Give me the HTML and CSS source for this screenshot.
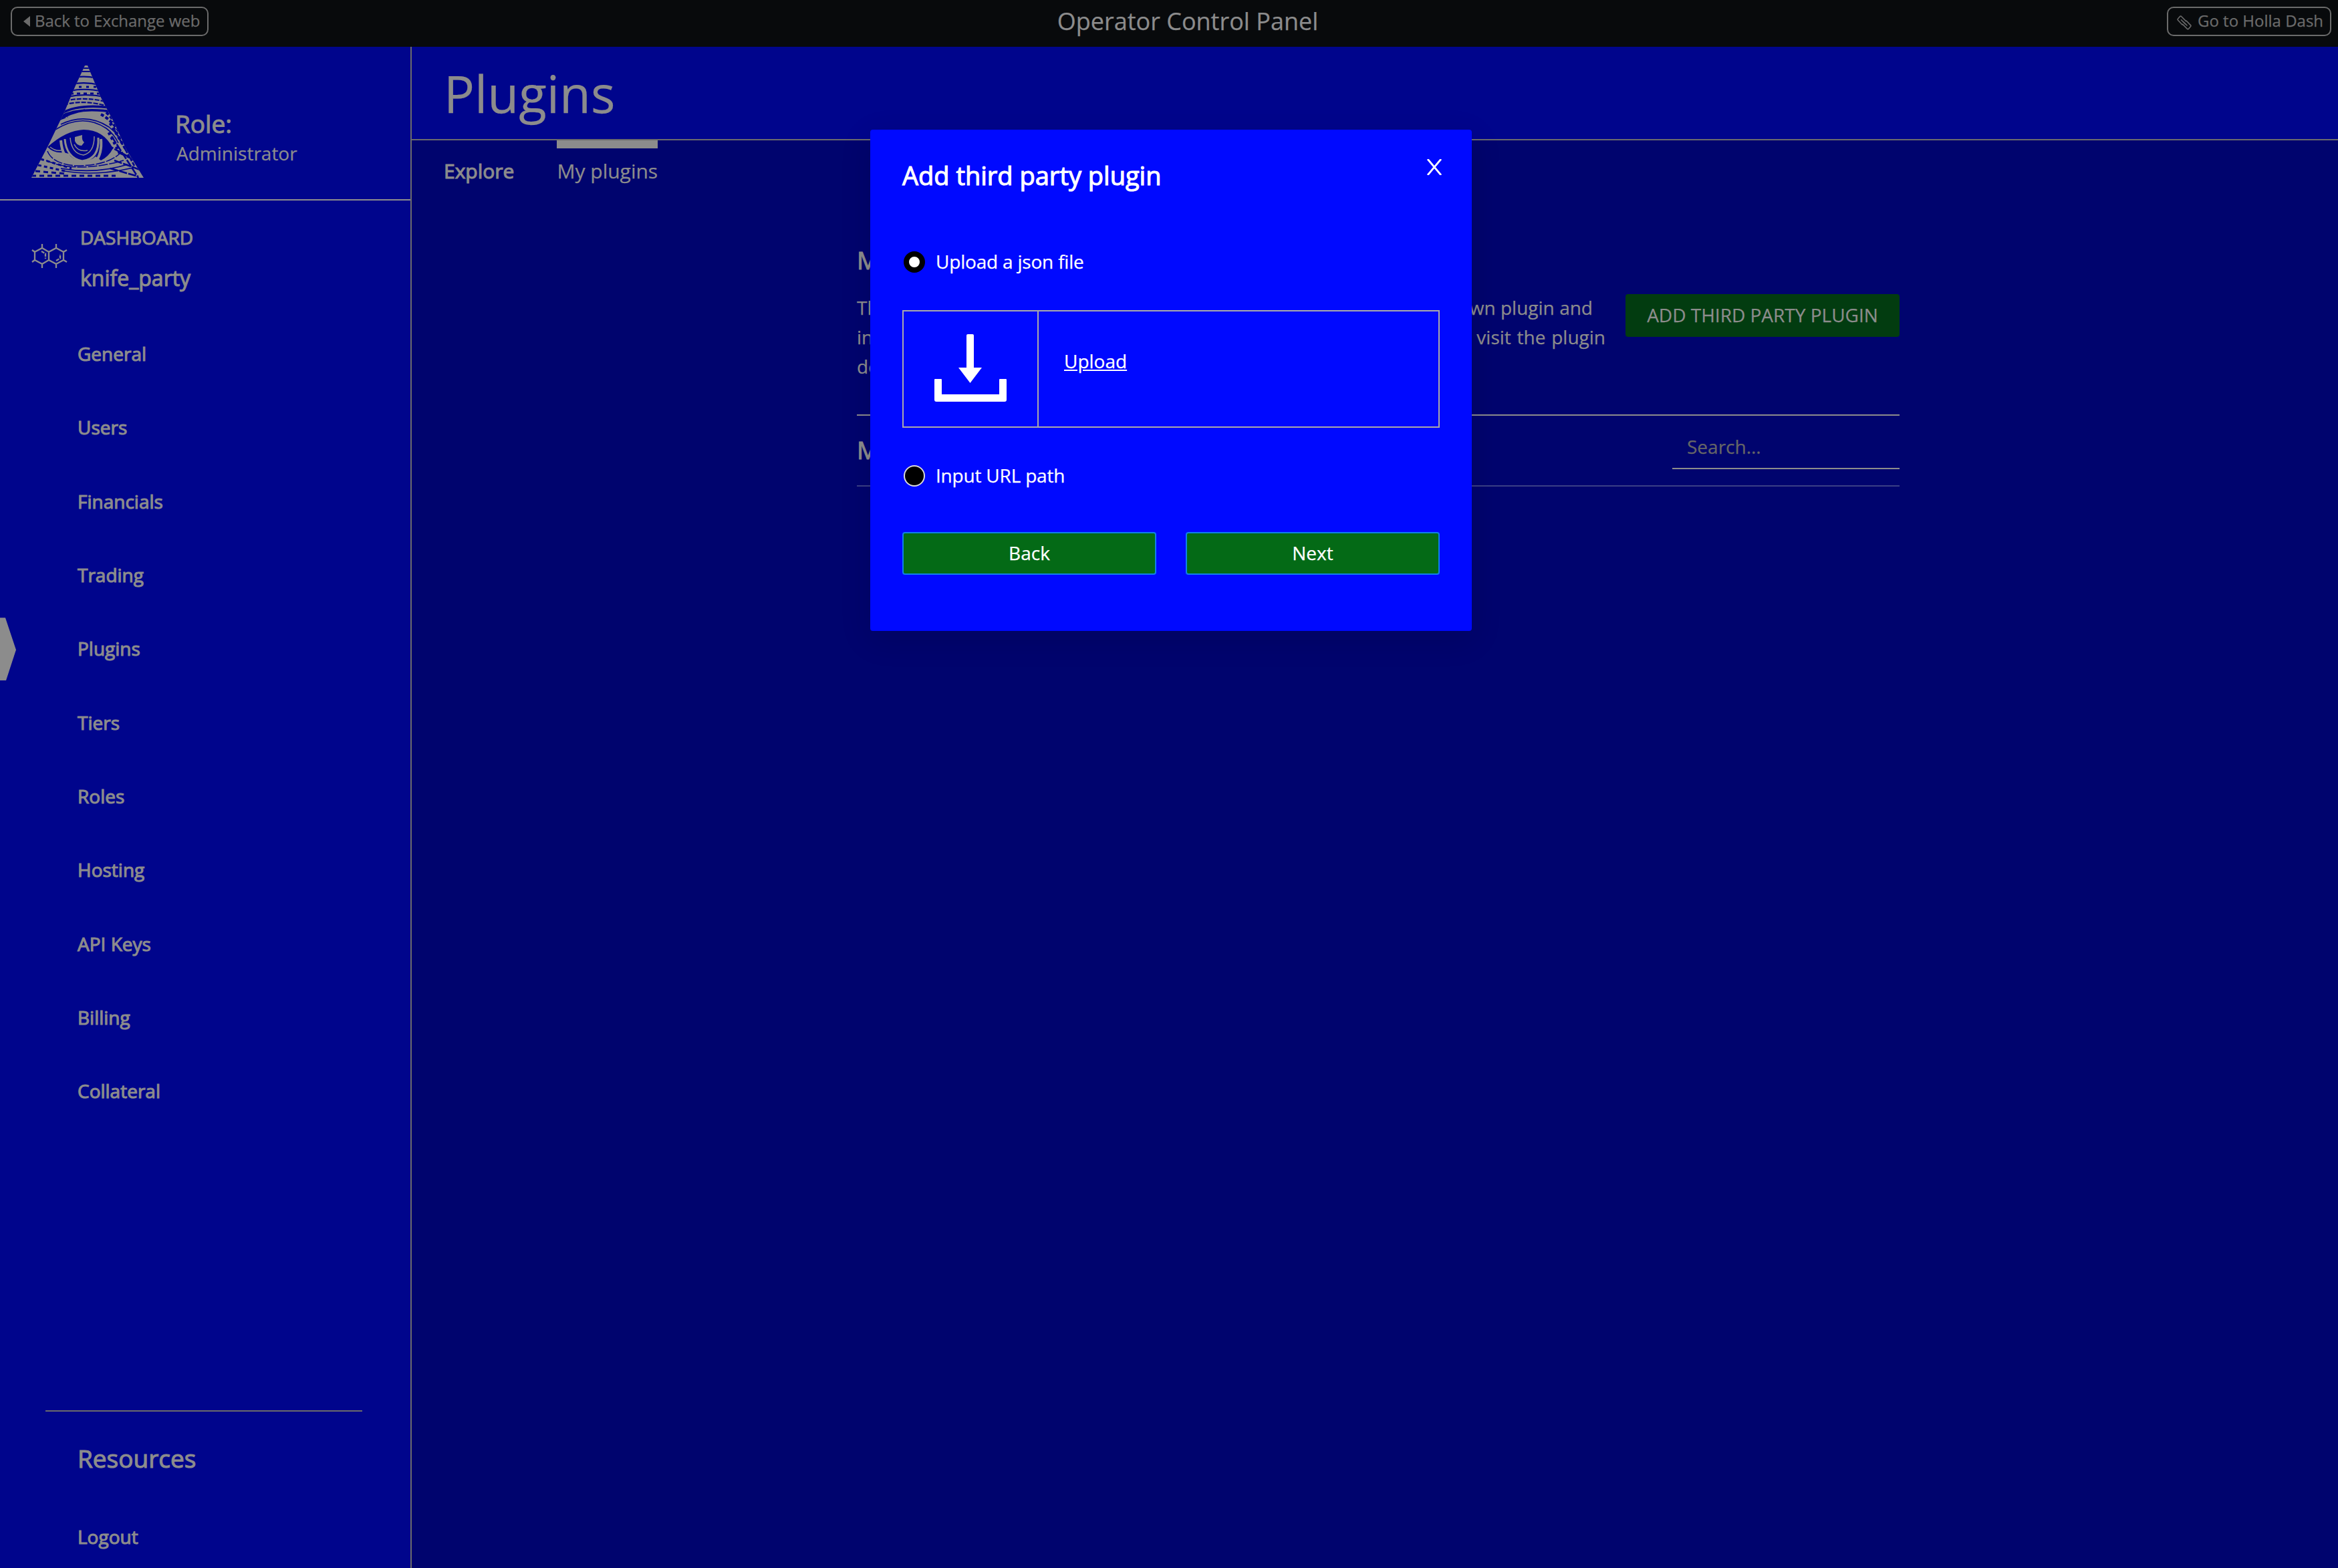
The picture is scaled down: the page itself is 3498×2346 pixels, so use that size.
FILE: index.html
```html
<!DOCTYPE html>
<html lang="en">
<head>
<meta charset="utf-8">
<title>Operator Control Panel</title>
<link rel="stylesheet" href="styles.css">
</head>
<body>
<div class="app">
  <header class="topbar">
    <a class="top-link top-link-back"><svg class="caret" viewBox="0 0 10 16"><path d="M10 0V16L0 8Z" fill="currentColor"/></svg><span>Back to Exchange web</span></a>
    <h1 class="top-title">Operator Control Panel</h1>
    <a class="top-link top-link-dash"><svg class="clip" viewBox="0 0 22 22" fill="none" stroke="currentColor" stroke-width="1.6" stroke-linecap="round" stroke-linejoin="round"><path d="M8 14L1.6 7.2Q.6 6 1.6 5L4.4 1.8Q5.6.6 6.8 1.8L13.500 8.600M6.500 6.800L12.500 13M9.500 9.500L15 15M14 8L20.400 14.600Q21.400 15.800 20.400 16.800L17.600 20Q16.400 21.200 15.200 20L8.600 13.400"/></svg><span>Go to Holla Dash</span></a>
  </header>
  <div class="body">
    <aside class="sidebar">
      <div class="profile">
        <svg class="logo" viewBox="0 0 168 168">
          <defs><clipPath id="pyramid"><path d="M80 0L84 0L104 48L124 86L142 126L168 168H0L26 118L50 68L66 30Z"/></clipPath></defs>
          <g clip-path="url(#pyramid)">
            <rect width="168" height="168" fill="#8c8c8c"/>
            <g fill="none" stroke="#00058c" stroke-width="2.200">
              <path d="M72 4H92M70 9H94M64 18Q80 15 98 19M60 28Q80 24 102 29M58 38Q80 33 106 39M54 47Q80 41 110 47"/>
              <path d="M50 53Q80 46 116 55M48 59Q80 50 118 62" stroke-dasharray="7 2"/>
              <path d="M60 32H106" stroke-dasharray="4 7" stroke-width="3"/>
              <path d="M58 42H110" stroke-dasharray="5 5" stroke-width="3"/>
              <path d="M44 72Q70 57 118 63M42 77Q72 61 126 70M38 83Q60 69 80 67" stroke-width="3.500"/>
              <path d="M32 87Q44 78 54 76M104 73Q124 84 138 110M112 70Q134 92 144 120" stroke-width="4" stroke-dasharray="5 3"/>
              <path d="M34 97Q76 70 112 94Q124 103 130 116M44 88Q82 70 116 92Q128 102 134 110" stroke-width="1.600"/>
              <path d="M24 128Q32 148 68 150Q112 150 132 132M22 142Q66 162 138 142" stroke-width="1.500" stroke-dasharray="14 2"/>
              <path d="M44 154Q96 163 144 148M50 158Q96 166 152 153" stroke-width="1.600"/>
              <path d="M14 140L60 154M10 149L50 158" stroke-dasharray="5 4" stroke-width="3"/>
              <path d="M6 158L52 162M0 165H126" stroke-dasharray="7 5" stroke-width="3"/>
              <path d="M124 96L154 150M120 106L160 168M130 130L168 148M124 142L168 158M118 154L160 166M112 118L148 138" stroke-width="2.600" stroke-dasharray="12 2"/>
              <path d="M118 86L142 126M116 100L134 134" stroke-width="5" stroke-dasharray="4 4"/>
            </g>
            <path d="M24 122Q52 97 78 96Q108 96 122 124Q116 136 104 142L96 136Q88 144 72 142Q60 140 56 132L48 130Q34 132 24 122Z" fill="#00058c"/>
            <g fill="none" stroke="#8c8c8c" stroke-width="3">
              <path d="M50 110Q52 138 76 143Q102 140 100 108"/>
              <path d="M58 108Q60 132 78 134Q94 130 94 106" stroke-width="1.500"/>
              <path d="M44 112Q46 138 62 146M104 110Q106 132 96 144" stroke-width="4"/>
              <path d="M28 122Q38 130 48 126M64 118Q70 130 84 127" stroke-width="1.500"/>
            </g>
            <path d="M65 107L76 104Q75 112 79 115L75 120Q68 120 65 113Z" fill="#8c8c8c"/>
          </g>
        </svg>
        <div class="role">
          <div class="role-label faux">Role:</div>
          <div class="role-name">Administrator</div>
        </div>
      </div>
      <div class="dash">
        <svg class="molecule" viewBox="0 0 54 38" fill="none" stroke="#8c8c8c" stroke-width="2.300"><path d="M16 1V7L5 13V25L16 31V37M37 1V7L26 13V25L37 31V37M16 7L26 13L37 7L48 13V25L37 31L26 25L16 31M5 13L1 10M5 25L1 28M48 13L53 10M48 25L53 28"/><path d="M15 12L21 15.500V23M37 26L43 22.500V16" stroke-dasharray="5 1.500"/></svg>
        <div class="dash-text">
          <div class="dash-title faux">DASHBOARD</div>
          <div class="dash-name faux">knife_party</div>
        </div>
      </div>
      <nav class="menu faux">
        <a>General</a><a>Users</a><a>Financials</a><a>Trading</a><a class="active">Plugins</a><a>Tiers</a><a>Roles</a><a>Hosting</a><a>API Keys</a><a>Billing</a><a>Collateral</a>
      </nav>
      <div class="side-bottom">
        <div class="resources faux">Resources</div>
        <div class="logout faux">Logout</div>
      </div>
    </aside>
    <main class="main">
      <h2 class="page-title">Plugins</h2>
      <div class="tabs"><a class="tab faux">Explore</a><a class="tab tab-active">My plugins</a></div>
      <section class="content">
        <h3 class="section-title faux">My plugins</h3>
        <div class="intro">
          <div class="intro-text">
            <p class="line line-a">This is where you can manage all your plugins. You can develop your own plugin and</p>
            <p class="line line-b">install it here for your exchange. For more details about development visit the plugin</p>
            <p class="line line-c">developer docs.</p>
          </div>
          <button class="add">ADD THIRD PARTY PLUGIN</button>
        </div>
        <div class="list-head">
          <h3 class="list-title faux">My plugins</h3>
          <div class="search">Search...</div>
        </div>
      </section>
    </main>
  </div>
</div>
<div class="modal">
  <svg class="close" viewBox="0 0 24 24" fill="none" stroke="#fff" stroke-width="2.800"><path d="M2 0L22 24M22 0L2 24"/></svg>
  <h2 class="modal-title faux">Add third party plugin</h2>
  <label class="option"><span class="radio radio-on"></span><span class="option-text">Upload a json file</span></label>
  <div class="upload">
    <div class="upload-icon"><svg class="tray" viewBox="0 0 108 102"><path d="M48 2Q48 0 50 0H57Q59 0 59 2V50H71L53.500 73L36 50H48Z" fill="#fff"/><path d="M0 68Q0 67 1 67H10Q11 67 11 68V90H97V68Q97 67 98 67H107Q108 67 108 68V98Q108 101 105 101H3Q0 101 0 98Z" fill="#fff"/></svg></div>
    <div class="upload-body"><a class="upload-link">Upload</a></div>
  </div>
  <label class="option option-url"><span class="radio"></span><span class="option-text">Input URL path</span></label>
  <div class="actions"><button class="btn">Back</button><button class="btn">Next</button></div>
</div>
</body>
</html>
```
FILE: styles.css
```css
* { box-sizing: border-box; }
body { margin: 0; background: #00046e; font-family: "Open Sans", sans-serif; font-size: 28px; line-height: 44px; color: #8c8c8c; overflow: hidden; -webkit-text-stroke: 0.25px currentColor; }
h1, h2, h3, p { margin: 0; font-weight: 400; }
button { font: inherit; margin: 0; padding: 0; }
.faux { -webkit-text-stroke: 1.1px currentColor; }
.app { width: 3498px; height: 2346px; display: flex; flex-direction: column; }
.topbar { height: 70px; flex: none; background: #080a0c; display: flex; justify-content: space-between; align-items: flex-start; padding: 10px 10px 0 16px; }
.top-link { display: flex; align-items: center; height: 44px; border: 2px solid #6b6b6b; border-radius: 10px; color: #6b6b6b; font-size: 24px; line-height: 38px; white-space: nowrap; }
.top-link span { padding-bottom: 2px; }
.top-link-back { width: 296px; padding-left: 17px; gap: 7px; letter-spacing: -0.04px; }
.top-link-dash { width: 246px; padding-left: 13px; gap: 9px; }
.caret { width: 10px; height: 16px; }
.clip { width: 22px; height: 22px; margin-top: 4px; }
.top-title { font-size: 36px; line-height: 44px; }
.body { flex: 1; display: flex; min-height: 0; }
.sidebar { width: 616px; border-right: 2px solid #6b6b6b; background: #00058c; display: flex; flex-direction: column; }
.profile { height: 230px; border-bottom: 2px solid #8c8c8c; display: flex; padding: 28px 0 0 47px; }
.logo { width: 168px; height: 168px; }
.role { padding: 63px 0 0 47px; }
.role-label { font-size: 37px; line-height: 48px; }
.role-name { line-height: 40px; margin-left: 2px; }
.dash { display: flex; padding: 33px 0 0 47px; }
.molecule { width: 54px; height: 38px; margin-top: 31px; }
.dash-text { padding-left: 19px; }
.dash-name { font-size: 32px; line-height: 48px; margin-top: 15px; }
.menu { padding-top: 34px; display: flex; flex-direction: column; }
.menu a { height: 110.3px; display: flex; align-items: center; padding-left: 116px; position: relative; }
.menu .active::before { content: ""; position: absolute; left: 0; top: 9px; width: 24px; height: 94px; background: #8c8c8c; clip-path: polygon(0 0, 8px 0, 24px 48px, 9px 94px, 0 94px); }
.side-bottom { margin: auto 72px 0 68px; height: 236px; border-top: 2px solid #6b6b6b; padding: 46px 0 0 48px; }
.resources { font-size: 37px; line-height: 48px; }
.logout { margin-top: 71px; }
.main { flex: 1; display: flex; flex-direction: column; }
.page-title { height: 140px; flex: none; background: #00058c; border-bottom: 2px solid #6b6b6b; font-size: 76.500px; line-height: 139px; padding-left: 48px; }
.tabs { display: flex; padding-left: 48px; gap: 64px; height: 98px; font-size: 30px; }
.tab { padding-top: 24px; border-top: 0 solid #8c8c8c; }
.tab-active { border-top-width: 12px; padding-top: 12px; }
.content { width: 1560px; margin-left: 666px; padding-top: 55px; }
.section-title, .list-title { font-size: 37px; line-height: 52px; }
.intro { display: flex; justify-content: space-between; align-items: flex-start; height: 205px; padding-top: 23px; }
.line { text-align-last: justify; white-space: nowrap; }
.line-a { width: 1101px; }
.line-b { width: 1120px; }
.line-c { width: 210px; }
.add { width: 410px; height: 64px; margin-top: 2px; padding-bottom: 2px; border: 0; border-radius: 4px; background: #023c10; color: #8c8c8c; }
.list-head { height: 108px; border-top: 2px solid #8c8c8c; border-bottom: 2px solid #3a3f85; display: flex; justify-content: space-between; align-items: flex-start; padding-top: 24px; }
.list-title { padding-top: 1px; }
.search { width: 340px; height: 56px; border-bottom: 2px solid #8c8c8c; color: #666; padding-left: 22px; }
.modal { position: absolute; left: 1302px; top: 194px; width: 900px; height: 750px; padding: 44px 48px 0; background: #0009ff; color: #fff; border-radius: 4px; box-shadow: 0 12px 48px rgba(0, 0, 0, .12); }
.close { position: absolute; left: 832px; top: 44px; width: 24px; height: 24px; }
.modal-title { font-size: 38px; line-height: 48px; }
.option { display: flex; align-items: center; height: 44px; margin-top: 84px; padding-left: 2px; gap: 16px; letter-spacing: -0.2px; }
.option-text { padding-bottom: 2px; }
.radio { width: 32px; height: 32px; border-radius: 50%; border: 2px solid #d9d9d9; background: #000; }
.radio-on { border: 8px solid #000; background: #fff; }
.upload { display: flex; height: 176px; margin-top: 50px; border: 2px solid #a9a9a9; }
.upload-icon { width: 202px; border-right: 2px solid #a9a9a9; padding: 34px 0 0 46px; }
.tray { width: 108px; height: 102px; display: block; }
.upload-body { padding: 52px 0 0 38px; }
.upload-link { text-decoration: underline; }
.option-url { margin-top: 50px; }
.actions { display: flex; gap: 44px; margin-top: 62px; }
.btn { width: 380px; height: 64px; padding-bottom: 2px; background: #046a16; border: 2px solid #1080e8; border-radius: 4px; color: #fff; }
```
